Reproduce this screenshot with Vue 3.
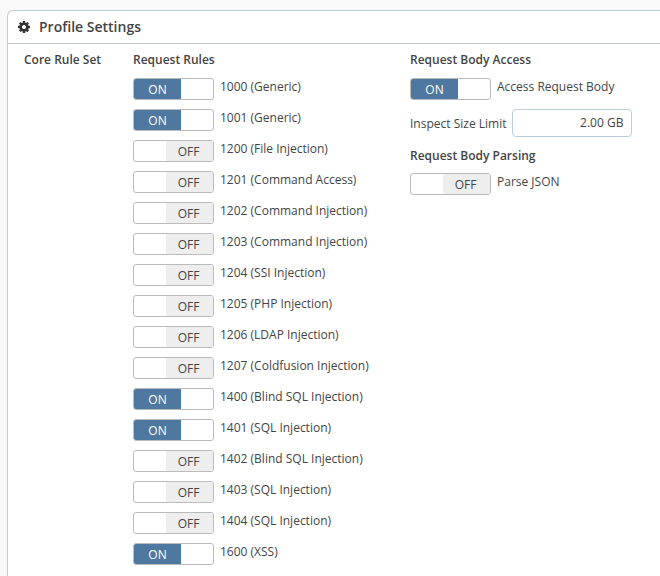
<script setup>
const rules = [
  { name: '1000 (Generic)', on: true },
  { name: '1001 (Generic)', on: true },
  { name: '1200 (File Injection)', on: false },
  { name: '1201 (Command Access)', on: false },
  { name: '1202 (Command Injection)', on: false },
  { name: '1203 (Command Injection)', on: false },
  { name: '1204 (SSI Injection)', on: false },
  { name: '1205 (PHP Injection)', on: false },
  { name: '1206 (LDAP Injection)', on: false },
  { name: '1207 (Coldfusion Injection)', on: false },
  { name: '1400 (Blind SQL Injection)', on: true },
  { name: '1401 (SQL Injection)', on: true },
  { name: '1402 (Blind SQL Injection)', on: false },
  { name: '1403 (SQL Injection)', on: false },
  { name: '1404 (SQL Injection)', on: false },
  { name: '1600 (XSS)', on: true }
]
</script>

<template>
  <div class="panel">
    <div class="panel-header">
      <svg class="gear" viewBox="0 0 1792 1792" aria-hidden="true">
        <path d="M1152 896q0-106-75-181t-181-75-181 75-75 181 75 181 181 75 181-75 75-181zm512-109v222q0 12-8 23t-20 13l-185 28q-19 54-39 91 35 50 107 138 10 12 10 25t-9 23q-27 37-99 108t-94 71q-12 0-26-9l-138-108q-44 23-91 38-16 136-29 186-7 28-36 28h-222q-14 0-24.500-8.500t-11.500-21.500l-28-184q-49-16-90-37l-141 107q-10 9-25 9-14 0-25-11-126-114-165-168-7-10-7-23 0-12 8-23 15-21 51-66.500t54-70.500q-27-50-41-99l-183-27q-13-2-21-12.500t-8-23.500v-222q0-12 8-23t19-13l186-28q14-46 39-92-40-57-107-138-10-12-10-24 0-10 9-23 26-36 98.500-107.500t94.500-71.500q13 0 26 10l138 107q44-23 91-38 16-136 29-186 7-28 36-28h222q14 0 24.500 8.500t11.500 21.500l28 184q49 16 90 37l142-107q9-9 24-9 13 0 25 10 129 119 165 170 7 8 7 22 0 12-8 23-15 21-51 66.500t-54 70.500q26 50 41 98l183 28q13 2 21 12.500t8 23.500z" />
      </svg>
      <h2>Profile Settings</h2>
    </div>
    <div class="panel-body">
      <div class="col-label">Core Rule Set</div>
      <div class="col-rules">
        <h3>Request Rules</h3>
        <div class="rule" v-for="rule in rules" :key="rule.name">
          <div class="switch" :class="rule.on ? 'is-on' : 'is-off'">
            <span class="handle">{{ rule.on ? 'ON' : 'OFF' }}</span>
          </div>
          <span class="rule-name">{{ rule.name }}</span>
        </div>
      </div>
      <div class="col-body">
        <h3>Request Body Access</h3>
        <div class="rule">
          <div class="switch is-on"><span class="handle">ON</span></div>
          <span class="rule-name">Access Request Body</span>
        </div>
        <div class="limit">
          <label>Inspect Size Limit</label>
          <div class="limit-input">2.00 GB</div>
        </div>
        <h3 class="parsing">Request Body Parsing</h3>
        <div class="rule">
          <div class="switch is-off"><span class="handle">OFF</span></div>
          <span class="rule-name">Parse JSON</span>
        </div>
      </div>
    </div>
  </div>
</template>

<style>
html, body {
  overflow: hidden;
  background: #f9f9f9;
}
</style>

<style scoped>
.panel {
  box-sizing: border-box;
  width: 653px;
  margin: 10px 0 0 7px;
  background: #fff;
  border: 1px solid #bccddb;
  border-right: none;
  border-radius: 6px 0 0 6px;
  font-family: "Open Sans", "Liberation Sans", sans-serif;
  font-size: 12px;
  color: #444;
}

.panel-header {
  display: flex;
  align-items: center;
  height: 32px;
  padding-left: 9px;
  border-bottom: 1px solid #c4ccd2;
}

.gear {
  width: 14px;
  height: 14px;
  fill: #333;
  margin: 0 8px 1px 0;
}

.panel-header h2 {
  margin: 0 0 2px;
  font-size: 14px;
  font-weight: 600;
  color: #444;
}

.panel-body {
  display: flex;
  padding: 7px 0 10px 16px;
}

.col-label {
  width: 109px;
  font-weight: 600;
  line-height: 17px;
}

.col-rules {
  width: 277px;
}

h3 {
  margin: 0 0 10px;
  font-size: 12px;
  font-weight: 600;
  line-height: 17px;
  color: #444;
}

.rule {
  display: flex;
  height: 22px;
  margin-bottom: 9px;
}

.switch {
  box-sizing: border-box;
  width: 81px;
  height: 22px;
  border: 1px solid #bbb;
  border-radius: 3px;
  overflow: hidden;
  display: flex;
  flex-shrink: 0;
}

.is-off {
  justify-content: flex-end;
}

.handle {
  display: block;
  text-align: center;
  line-height: 21px;
}

.is-on .handle {
  width: 47px;
  background: #4e78a0;
  color: #fff;
}

.is-off .handle {
  box-sizing: border-box;
  width: 47px;
  padding-right: 2px;
  background: #eee;
  color: #444;
}

.rule-name {
  margin-left: 6px;
  line-height: 17px;
}

.limit {
  display: flex;
  align-items: center;
  margin-bottom: 10px;
}

.limit-input {
  box-sizing: border-box;
  width: 120px;
  height: 28px;
  margin-left: 6px;
  padding-right: 8px;
  border: 1px solid #bccddb;
  border-radius: 4px;
  text-align: right;
  line-height: 26px;
}

.parsing {
  margin-bottom: 9px;
}
</style>
